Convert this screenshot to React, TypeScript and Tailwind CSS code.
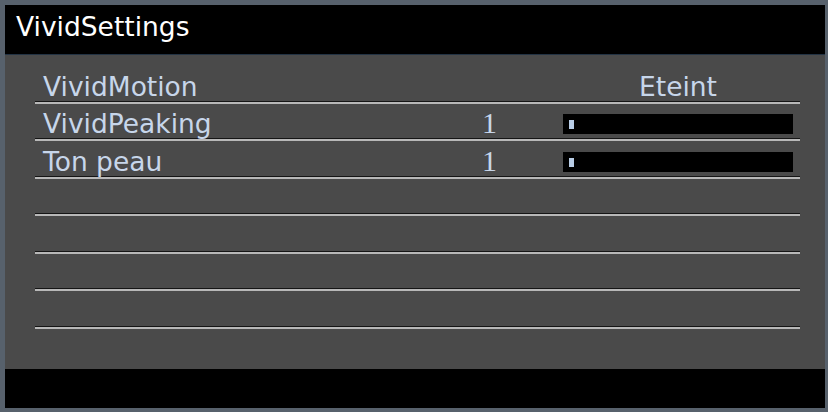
import React from "react";

const rows = [
  { label: "VividMotion", value: "", kind: "text", text: "Eteint" },
  { label: "VividPeaking", value: "1", kind: "bar" },
  { label: "Ton peau", value: "1", kind: "bar" },
  { label: "", value: "", kind: "none" },
  { label: "", value: "", kind: "none" },
  { label: "", value: "", kind: "none" },
  { label: "", value: "", kind: "none" },
];

const heights = ["h-[38px]", "h-[37px]", "h-[38px]", "h-[37px]", "h-[38px]", "h-[37px]", "h-[38px]"];

export default function App() {
  return (
    <div
      className="w-[828px] h-[412px] bg-[#57616c] pt-[5px] pl-[5px] pr-[3px] pb-[4px] flex flex-col"
      style={{ fontFamily: '"DejaVu Sans", Verdana, sans-serif' }}
    >
      <div className="h-[49px] bg-black text-white text-[26.5px] leading-[26px] pl-[11px] pt-[9px]">
        VividSettings
      </div>
      <div className="h-[1px] bg-[#233344]" />
      <div className="flex-1 bg-[#4a4a4a] pt-[9px] pl-[30px] pr-[25px]">
        {rows.map((r, i) => (
          <div
            key={i}
            className={`${heights[i]} grid grid-cols-[445px_83px_230px_1fr] border-b-[1px] border-[#151515] shadow-[0_2px_0_#b8b8b8] text-[#c7d6ea] text-[26.5px] leading-[26px]`}
          >
            <div className="self-end pl-[8px] pb-[1px] whitespace-nowrap">{r.label}</div>
            <div
              className="self-end pb-[2px] pl-[2px] text-[30px] leading-[26px]"
              style={{ fontFamily: '"Liberation Serif", "DejaVu Serif", serif' }}
            >
              {r.value}
            </div>
            <div className="self-end">
              {r.kind === "text" && (
                <div className="text-center pb-[1px]">{r.text}</div>
              )}
              {r.kind === "bar" && (
                <div className="h-[20px] mb-[4px] bg-black flex items-center pl-[6px]">
                  <div className="w-[5px] h-[9px] bg-[#b9cde6]" />
                </div>
              )}
            </div>
            <div />
          </div>
        ))}
      </div>
      <div className="h-[39px] bg-black" />
    </div>
  );
}
